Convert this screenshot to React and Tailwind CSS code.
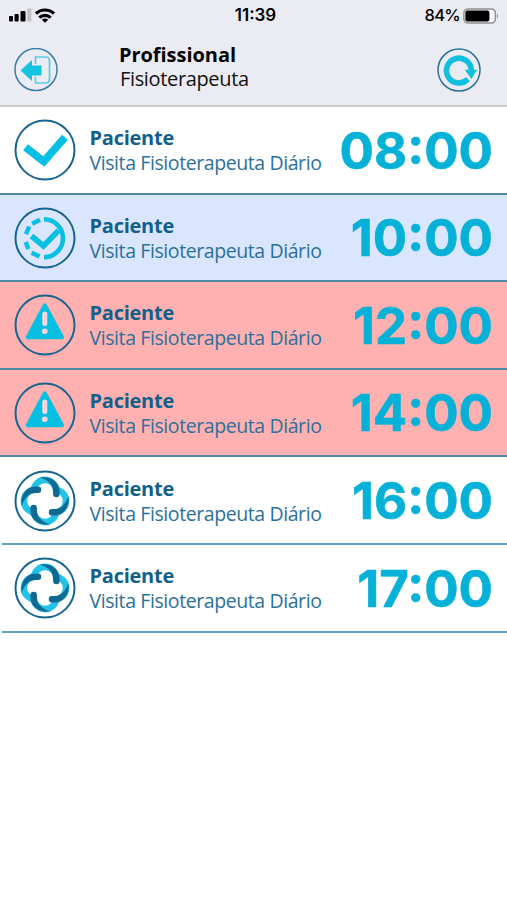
import clsx from 'clsx'

const visits = [
  { time: '08:00', status: 'done' },
  { time: '10:00', status: 'progress' },
  { time: '12:00', status: 'late' },
  { time: '14:00', status: 'late' },
  { time: '16:00', status: 'scheduled' },
  { time: '17:00', status: 'scheduled' },
]

const CheckMark = () => (
  <path d="M11.5 28.2 L29.8 42.5 L51 18.2" fill="none" stroke="#06bfe3" strokeWidth="7.8" />
)

const ProgressMark = () => (
  <g fill="none" stroke="#06bfe3">
    <path d="M30 12.2 A19 19 0 0 1 30 50.2" strokeWidth="4.6" />
    <path d="M26 12.8 L18.2 16.8 M15.3 19.5 L12 27.2 M11.8 35 L14.4 42 M17.6 45.8 L25.5 49.6" strokeWidth="4.4" />
    <path d="M17.5 29 L29.5 39 L44.5 23.5" strokeWidth="5.6" />
  </g>
)

function WarningMark({ hole }) {
  return (
    <g>
      <path d="M30.8 11.5 L48 43.2 H13.8 Z" fill="#06bfe3" stroke="#06bfe3" strokeWidth="4.2" strokeLinejoin="round" />
      <path d="M30.8 20 V29.6" stroke={hole} strokeWidth="5" strokeLinecap="round" />
      <circle cx="30.8" cy="37.3" r="2.8" fill={hole} />
    </g>
  )
}

const BrandMark = () => (
  <g transform="translate(31 31)">
    {[0, 90, 180, 270].map(a => (
      <path key={a} transform={`rotate(${a})`} d="M-11.3 -8 V-9.8 A11.3 11.3 0 0 1 11.3 -9.8" fill="none" stroke="#22c3e6" strokeWidth="6.6" />
    ))}
    {[0, 90, 180, 270].map(a => (
      <path key={a} transform={`rotate(${a})`} d="M-5 -23.4 C6 -25 14.6 -18.5 14.6 -9.8 V-7 a3.2 3.2 0 0 1 -6.5 0 V-9.8 C8.1 -15.5 4 -20.5 -5 -23.4 Z" fill="#0e6a92" />
    ))}
  </g>
)

function StatusIcon({ status }) {
  return (
    <svg viewBox="0 0 62 62" className="h-[62px] w-[62px] shrink-0">
      <circle cx="31" cy="31" r="29.5" fill={status === 'scheduled' ? '#fff' : 'none'} stroke="#176491" strokeWidth="2" />
      {status === 'done' && <CheckMark />}
      {status === 'progress' && <ProgressMark />}
      {status === 'late' && <WarningMark hole="#ffd5d8" />}
      {status === 'scheduled' && <BrandMark />}
    </svg>
  )
}

function StatusBar() {
  return (
    <div className="flex h-[31px] items-center pr-2 pl-[9px] font-['Inter',sans-serif] text-black">
      <div className="flex flex-1 items-center gap-[3px]">
        <svg viewBox="0 0 23 14" className="-mt-px h-[14px] w-[23px]">
          <rect x="0" y="8" width="4" height="5.5" rx="1" />
          <rect x="5.5" y="6" width="4.2" height="7.5" rx="1" />
          <rect x="11.5" y="3" width="5" height="10.5" rx="1" />
          <rect x="18.2" y="0.5" width="4.2" height="13" rx="1" fill="#c2c2c6" />
        </svg>
        <svg viewBox="0 0 20 15" className="-mt-px h-[15px] w-[20px]" fill="none" stroke="#000" strokeWidth="3.2">
          <path d="M1 5.6 C6 0.8 14 0.8 19 5.6" />
          <path d="M4.3 9.6 C7.5 6.6 12.5 6.6 15.7 9.6" />
          <path d="M10 14.8 L6.8 11.8 Q10 9.3 13.2 11.8 Z" fill="#000" stroke="none" />
        </svg>
      </div>
      <span className="pl-[3px] text-[17px] font-semibold">11:39</span>
      <div className="flex flex-1 items-center justify-end gap-[3px]">
        <span className="text-[16.5px] font-medium tracking-[-0.7px]">84%</span>
        <svg viewBox="0 0 36 16" className="h-4 w-9">
          <rect x="0.9" y="0.9" width="31.5" height="14.2" rx="4" fill="#f4f4f8" stroke="#8f8f93" strokeWidth="1.5" />
          <rect x="2.4" y="2.4" width="24" height="11.2" rx="2" />
          <path d="M34 5.5 Q36 8 34 10.5 Z" fill="#8f8f93" />
        </svg>
      </div>
    </div>
  )
}

function Header() {
  return (
    <header className="h-[107px] border-b-2 border-[#cacacd] bg-[#ebebf3]">
      <StatusBar />
      <div className="flex items-start pt-[17px] pr-[26px] pl-[14px]">
        <button className="shrink-0">
          <svg viewBox="0 0 44 44" className="h-11 w-11" fill="none">
            <circle cx="22" cy="21.5" r="21" stroke="#3b7ba8" strokeWidth="1.5" />
            <path d="M21.5 16 V9 H31.5 Q35.5 9 35.5 13 V31 Q35.5 35 31.5 35 H21.5 V29" stroke="#5ccbe8" strokeWidth="1.7" />
            <path d="M6.5 22.5 L18 12 V17.5 H27.5 V27.5 H18 V33 Z" fill="#12c4e0" />
          </svg>
        </button>
        <div className="ml-[61px] flex-1 font-['Open_Sans','Noto_Sans',sans-serif] text-[20px] leading-[24px] text-black">
          <h1 className="-mt-[5px] font-bold tracking-[-0.05px]">Profissional</h1>
          <p className="pl-px tracking-[-0.35px] text-[#111]">Fisioterapeuta</p>
        </div>
        <button className="shrink-0">
          <svg viewBox="0 0 44 44" className="h-11 w-11" fill="none">
            <circle cx="22" cy="22" r="21" stroke="#2a7196" strokeWidth="1.5" />
            <path d="M31 31 A12.4 12.4 0 1 1 34.3 22" stroke="#10c1df" strokeWidth="5.6" />
            <path d="M27.8 21.8 H40.2 L34.3 31 Z" fill="#10c1df" />
          </svg>
        </button>
      </div>
    </header>
  )
}

function VisitRow({ time, status }) {
  return (
    <li
      className={clsx(
        'h-[87.6px]',
        status === 'progress' && 'bg-[#dae6ff]',
        status === 'late' && 'bg-[#ffb0b0]',
        status === 'scheduled' && 'pl-[2px]'
      )}
    >
      <div
        className={clsx(
          'flex h-full items-center border-b-2 pt-[0.8px] pr-[14px]',
          status === 'scheduled' ? 'border-[#659fbf] pl-[11.5px]' : 'border-[#4f87a8] pl-[13.5px]'
        )}
      >
        <StatusIcon status={status} />
        <div className="ml-[14px] flex-1 font-['Open_Sans','Noto_Sans',sans-serif] leading-[25px] whitespace-nowrap">
          <h2 className="text-[20px] font-bold tracking-[-0.25px] text-[#115f8b]">Paciente</h2>
          <p className="text-[19.5px] tracking-[-0.41px] text-[#2b7199]">Visita Fisioterapeuta Diário</p>
        </div>
        <time className="font-['Inter',sans-serif] text-[51px] leading-none font-bold text-[#06b1d8] [-webkit-text-stroke:0.6px_#06b1d8]">{time}</time>
      </div>
    </li>
  )
}

export default function App() {
  return (
    <div className="h-[900px] w-[507px] overflow-hidden bg-white">
      <Header />
      <ul>
        {visits.map(visit => (
          <VisitRow key={visit.time} {...visit} />
        ))}
      </ul>
    </div>
  )
}
